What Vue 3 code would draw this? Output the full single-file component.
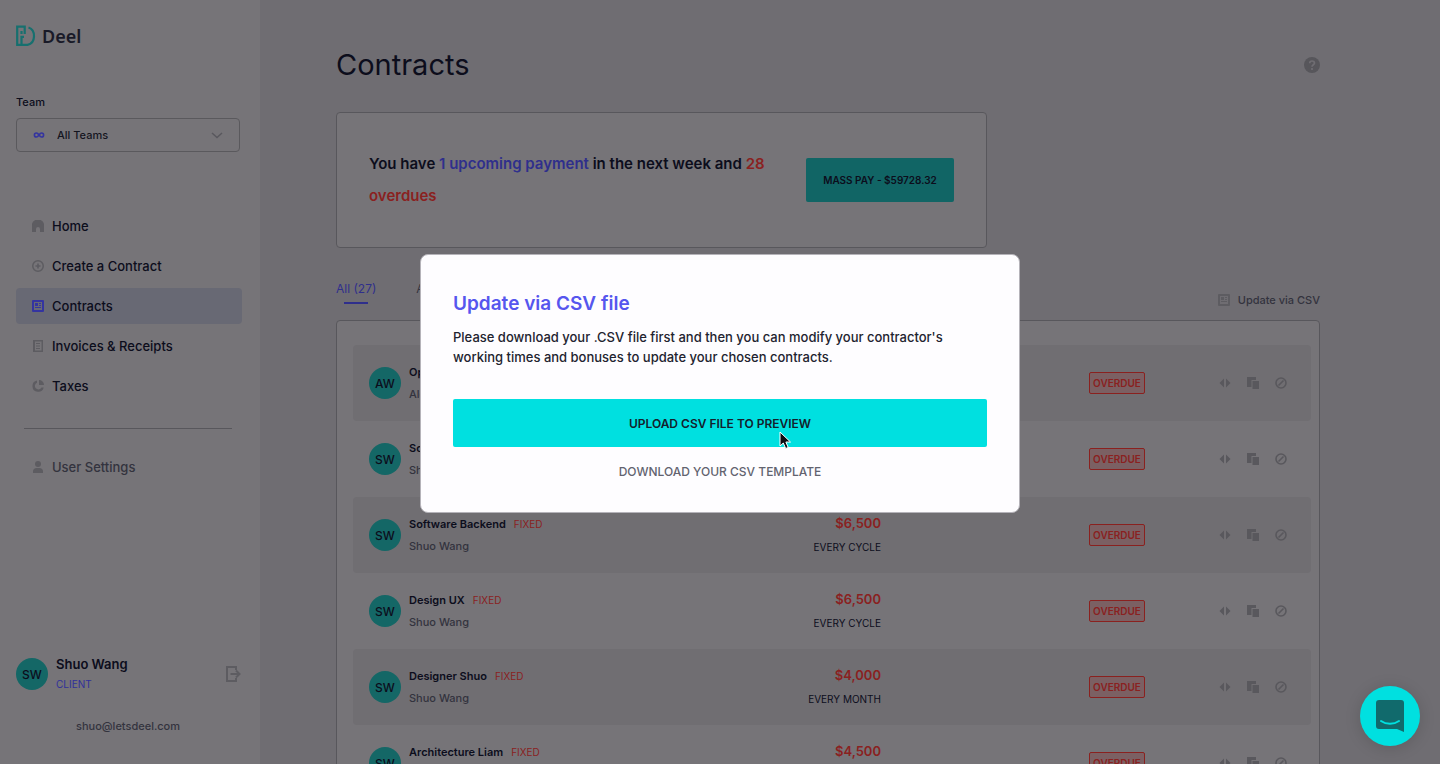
<template>
  <div class="app">
    <aside class="sidebar">
      <a class="logo" href="#">
        <svg width="20" height="22" viewBox="0 0 20 22" fill="none" stroke="#17706f" stroke-width="2.200">
          <path d="M1.200 21V1.600h7.500V9" />
          <path d="M1.200 19.800H5.500v-8H8M5.500 6v3" />
          <path d="M12.500 2.500c7.500 2.500 7.500 15.500-1 17.300H5.500" />
        </svg>
        <span>Deel</span>
      </a>

      <label class="team-label" for="team">Team</label>
      <div class="select">
        <svg width="12" height="6" viewBox="0 0 14 8" fill="none" stroke="#3434a0" stroke-width="2.200">
          <path d="M7 4C5.500 1.800 4.600 1.300 3.600 1.300a2.700 2.700 0 0 0 0 5.400C4.600 6.700 5.500 6.200 7 4s2.400-2.700 3.400-2.700a2.700 2.700 0 0 1 0 5.400C9.400 6.700 8.500 6.200 7 4z" />
        </svg>
        <select id="team" v-model="team">
          <option>All Teams</option>
        </select>
        <svg class="chevron" width="12" height="7" viewBox="0 0 12 7" fill="none" stroke="#59585e" stroke-width="1.500">
          <path d="M1 1l5 4.500L11 1" />
        </svg>
      </div>

      <nav class="nav">
        <a
          v-for="item in menu"
          :key="item.label"
          href="#"
          class="nav-item"
          :class="{ 'nav-item--active': item.label === current }"
          @click.prevent="current = item.label"
        >
          <svg width="12" height="12" viewBox="0 0 12 12"><path :d="item.icon" fill="currentColor" fill-rule="evenodd" /></svg>
          <span>{{ item.label }}</span>
        </a>
      </nav>

      <hr class="divider" />

      <a href="#" class="nav-item nav-item--muted">
        <svg width="12" height="12" viewBox="0 0 12 12" fill="currentColor">
          <circle cx="6" cy="3" r="3" />
          <path d="M1 12V10.500C1 8.300 2.500 7 4.500 7h3C9.500 7 11 8.300 11 10.500V12z" />
        </svg>
        <span>User Settings</span>
      </a>

      <div class="user">
        <span class="avatar">SW</span>
        <div class="user-info">
          <strong>Shuo Wang</strong>
          <span>CLIENT</span>
        </div>
        <button class="icon-btn" aria-label="Log out">
          <svg width="16" height="16" viewBox="0 0 16 16" fill="none" stroke="#5d5c61" stroke-width="2">
            <path d="M10 4V1H1v14h9v-3M4.500 8h9M10 4.500L13.500 8 10 11.500" />
          </svg>
        </button>
      </div>
      <a class="email" href="#">shuo@letsdeel.com</a>
    </aside>

    <main class="main">
      <header class="head">
        <h1>Contracts</h1>
        <button class="icon-btn" aria-label="Help">
          <svg width="16" height="16" viewBox="0 0 16 16" fill="none">
            <circle cx="8" cy="8" r="8" fill="#57565b" />
            <path d="M5.700 6.300c0-3.100 4.800-3 4.800-.2C10.500 7.800 8 7.700 8 9.700M8 11v2" stroke="#6f6d72" stroke-width="1.700" />
          </svg>
        </button>
      </header>

      <section class="banner">
        <p>
          You have <a href="#" class="upcoming">1 upcoming payment</a> in the next week and
          <a href="#" class="overdues">28 overdues</a>
        </p>
        <button class="mass-pay">MASS PAY - $59728.32</button>
      </section>

      <div class="toolbar">
        <div class="tabs">
          <button class="tab tab--active">All (27)</button>
          <button class="tab">Active</button>
        </div>
        <button class="csv-link">
          <svg width="12" height="12" viewBox="0 0 12 12"><path :d="icons.contract" fill="currentColor" fill-rule="evenodd" /></svg>
          Update via CSV
        </button>
      </div>

      <section class="card">
        <table class="contracts">
          <colgroup>
            <col />
            <col class="col-amount" />
            <col class="col-status" />
            <col class="col-actions" />
          </colgroup>
          <tbody>
            <tr v-for="(c, i) in contracts" :key="i">
              <td>
                <div class="contract">
                  <span class="avatar">{{ c.initials }}</span>
                  <div>
                    <div class="name">{{ c.name }}<span class="type">FIXED</span></div>
                    <div class="person">{{ c.person }}</div>
                  </div>
                </div>
              </td>
              <td class="right">
                <div class="amount">{{ c.amount }}</div>
                <div class="period">{{ c.period }}</div>
              </td>
              <td class="right"><span class="badge">OVERDUE</span></td>
              <td class="right">
                <div class="actions">
                  <button aria-label="Expand">
                    <svg width="12" height="12" viewBox="0 0 12 12" fill="currentColor"><path d="M5 1.500v9L.5 6zM7 1.500v9L11.500 6z" /></svg>
                  </button>
                  <button aria-label="Duplicate">
                    <svg width="12" height="12" viewBox="0 0 12 12" fill="currentColor"><path d="M0 0h9v3H4.500v7H0zM5.500 4H12v8H5.500z" /></svg>
                  </button>
                  <button aria-label="Cancel">
                    <svg width="12" height="12" viewBox="0 0 12 12" fill="none" stroke="currentColor" stroke-width="1.600">
                      <circle cx="6" cy="6" r="5" />
                      <path d="M3.500 8.500l5-5" />
                    </svg>
                  </button>
                </div>
              </td>
            </tr>
          </tbody>
        </table>
      </section>
    </main>

    <div class="overlay">
      <div class="modal" role="dialog" aria-modal="true" aria-labelledby="modal-title">
        <h2 id="modal-title">Update via CSV file</h2>
        <p>
          Please download your .CSV file first and then you can modify your contractor's
          working times and bonuses to update your chosen contracts.
        </p>
        <button class="upload">
          UPLOAD CSV FILE TO PREVIEW
          <svg class="cursor" width="13" height="19" viewBox="0 0 13 19">
            <path d="M1 1v14l3.300-3 2.400 5.500 2.500-1.100L6.900 11h4.600z" fill="#0b0b12" stroke="#fff" />
          </svg>
        </button>
        <button class="download">DOWNLOAD YOUR CSV TEMPLATE</button>
      </div>
    </div>

    <button class="chat" aria-label="Open chat">
      <svg width="28" height="32" viewBox="0 0 28 32">
        <path d="M3 0h22a3 3 0 0 1 3 3v29l-7-3H3a3 3 0 0 1-3-3V3a3 3 0 0 1 3-3z" fill="#116a6c" />
        <path d="M5 21c5 3.600 13 3.600 18 0" fill="none" stroke="#00e0e0" stroke-width="2" stroke-linecap="round" />
      </svg>
    </button>
  </div>
</template>

<script setup>
import { ref } from 'vue'

const icons = {
  home: 'M0 4.500C0 2.500 2 0 4 0h4c2 0 4 2.500 4 4.500V12H8V9a2 2 0 0 0-4 0v3H0z',
  create: 'M6 0a6 6 0 1 1 0 12A6 6 0 0 1 6 0zM6 1.500a4.500 4.500 0 1 0 0 9 4.500 4.500 0 0 0 0-9zM5.200 3.500h1.600v1.700h1.700v1.600H6.800v1.700H5.200V6.800H3.500V5.200h1.700z',
  contract: 'M1 0h10a1 1 0 0 1 1 1v10a1 1 0 0 1-1 1H1a1 1 0 0 1-1-1V1a1 1 0 0 1 1-1zM2 2v8h8V2zM3 3h3v3H3zM7 3h2v1H7zM7 5h2v1H7zM3 7h6v1H3z',
  invoice: 'M1 0h10v12H1zM3 1.500v9h6.500v-9zM4 3h4v1H4zM4 5.500h4v1H4zM4 8h4v1H4z',
  tax: 'M5 .500v2.200a3.500 3.500 0 1 0 4.500 4.800h2.200A5.700 5.700 0 1 1 5 .500zM7 0a5 5 0 0 1 5 5H7z',
}

const menu = [
  { label: 'Home', icon: icons.home },
  { label: 'Create a Contract', icon: icons.create },
  { label: 'Contracts', icon: icons.contract },
  { label: 'Invoices & Receipts', icon: icons.invoice },
  { label: 'Taxes', icon: icons.tax },
]

const current = ref('Contracts')
const team = ref('All Teams')

const contracts = [
  { initials: 'AW', name: 'Operations', person: 'Alex Wang', amount: '$5,000', period: 'EVERY MONTH' },
  { initials: 'SW', name: 'Software Frontend', person: 'Shuo Wang', amount: '$6,500', period: 'EVERY CYCLE' },
  { initials: 'SW', name: 'Software Backend', person: 'Shuo Wang', amount: '$6,500', period: 'EVERY CYCLE' },
  { initials: 'SW', name: 'Design UX', person: 'Shuo Wang', amount: '$6,500', period: 'EVERY CYCLE' },
  { initials: 'SW', name: 'Designer Shuo', person: 'Shuo Wang', amount: '$4,000', period: 'EVERY MONTH' },
  { initials: 'SW', name: 'Architecture Liam', person: 'Shuo Wang', amount: '$4,500', period: 'EVERY MONTH' },
]
</script>

<style>
body { margin: 0; background: #6f6d72; }
</style>

<style scoped>
* { box-sizing: border-box; }
.app {
  display: flex; height: 100vh; overflow: hidden;
  font-family: Inter, "Liberation Sans", sans-serif;
  font-size: 12px; color: #0c0d1c; background: #6f6d72;
}
a { color: inherit; text-decoration: none; }
button { font: inherit; color: inherit; border: none; background: none; padding: 0; cursor: pointer; }
svg { flex: none; display: block; }

/* Sidebar */
.sidebar {
  width: 260px; flex: none; display: flex; flex-direction: column;
  padding: 24px 18px 28px 16px; background: #767478;
}
.logo {
  display: flex; align-items: center; gap: 6px; height: 24px;
  font: 600 18px/24px "Noto Sans", sans-serif; color: #191a28;
}
.team-label { margin-top: 44px; font-size: 11px; line-height: 20px; font-weight: 500; }
.select {
  display: flex; align-items: center; width: 224px; height: 34px; margin-top: 6px;
  padding: 0 16px; border: 1px solid #5a595d; border-radius: 4px;
}
.select select {
  flex: 1; appearance: none; border: none; outline: none; background: none;
  padding: 0 0 0 12px; font: inherit; font-size: 11px; font-weight: 500; color: #14151f;
}
.nav { display: flex; flex-direction: column; gap: 4px; margin-top: 56px; }
.nav-item {
  display: flex; align-items: center; gap: 8px; height: 36px; padding-left: 16px;
  border-radius: 4px; font-size: 13px; font-weight: 500;
}
.nav-item svg { color: #5d5c61; }
.nav-item--active { background: #686974; }
.nav-item--active svg { color: #3434a0; }
.nav-item--muted { color: #33333e; }
.divider { width: 208px; margin: 24px 8px 20px; border: none; border-top: 1px solid #58575c; }
.avatar {
  display: flex; align-items: center; justify-content: center; flex: none;
  width: 32px; height: 32px; border-radius: 50%; background: #146766; font-size: 12px; font-weight: 500;
}
.user { display: flex; align-items: center; gap: 8px; margin-top: auto; }
.user-info { flex: 1; display: flex; flex-direction: column; }
.user-info strong { font-size: 13px; line-height: 20px; font-weight: 600; }
.user-info span { font-size: 10px; line-height: 20px; color: #30309a; }
.email { margin-top: 22px; padding-left: 60px; font-size: 11px; line-height: 20px; font-weight: 500; color: #33333e; }

/* Main */
.main { flex: 1; min-width: 0; padding: 42px 120px 0 76px; }
.head { display: flex; align-items: center; justify-content: space-between; height: 46px; }
.head h1 { margin: 0; font-size: 29px; line-height: 46px; font-weight: 400; }
.banner {
  display: flex; align-items: center; gap: 24px; width: 651px; margin-top: 24px;
  padding: 35px 32px; border: 1px solid #58575c; border-radius: 4px; background: #767478;
}
.banner p { flex: 1; margin: 0; font-size: 15px; line-height: 32px; font-weight: 600; }
.upcoming { color: #2f2f8c; }
.overdues { color: #8a211f; }
.mass-pay {
  flex: none; width: 148px; height: 44px; border-radius: 2px; background: #116565;
  font-size: 10px; font-weight: 600;
}
.toolbar { display: flex; justify-content: space-between; height: 72px; padding-top: 28px; }
.tabs { display: flex; gap: 40px; align-items: flex-start; }
.tab {
  display: flex; flex-direction: column; align-items: center;
  font-size: 12px; line-height: 26px; color: #33333e;
}
.tab--active { color: #2f2f8c; }
.tab--active::after { content: ''; width: 24px; height: 2px; background: #2f2f8c; }
.csv-link {
  display: flex; align-items: center; gap: 8px; height: 48px;
  font-size: 11px; font-weight: 500; color: #33333e;
}
.csv-link svg { color: #5d5c61; }

.card {
  padding: 24px 8px 24px 16px; border: 1px solid #58575c; border-radius: 4px; background: #767478;
}
.contracts { width: 100%; table-layout: fixed; border-collapse: separate; border-spacing: 0; }
.col-amount { width: 128px; }
.col-status { width: 264px; }
.col-actions { width: 166px; }
.contracts td { height: 76px; padding: 0; vertical-align: middle; }
.contracts tr:nth-child(odd) td { background: #706e72; }
.contracts td:first-child { padding-left: 16px; border-radius: 4px 0 0 4px; }
.contracts td:last-child { padding-right: 16px; border-radius: 0 4px 4px 0; }
.right { text-align: right; }
.contract { display: flex; align-items: center; gap: 8px; }
.name { font-size: 11px; line-height: 22px; font-weight: 600; }
.type { margin-left: 8px; font-size: 10px; font-weight: 400; color: #8a211f; }
.person { font-size: 11px; line-height: 22px; font-weight: 500; color: #33333e; }
.amount { font-size: 13px; line-height: 24px; font-weight: 600; color: #8a211f; }
.period { font-size: 10px; line-height: 24px; }
.badge {
  display: inline-block; width: 56px; height: 22px; border: 1px solid #8a211f; border-radius: 2px;
  background: #7b6063; color: #8a211f; font-size: 10px; line-height: 20px; font-weight: 600; text-align: center;
}
.actions { display: flex; justify-content: flex-end; }
.actions button { display: flex; justify-content: center; width: 28px; color: #59585d; }

/* Modal */
.overlay {
  position: fixed; inset: 0; display: flex; align-items: center; justify-content: center; padding-top: 3px;
}
.modal {
  display: flex; flex-direction: column; width: 600px; padding: 32px 32px 17px;
  border: 1px solid #b5b3b9; border-radius: 8px; background: #fefdff; color: #22232f;
}
.modal h2 { margin: 0; font-size: 19px; line-height: 34px; font-weight: 600; color: #5656ee; }
.modal p { margin: 6px 0 32px; font-size: 13px; line-height: 20px; font-weight: 500; }
.upload {
  position: relative; height: 48px; border-radius: 2px; background: #00e0e0;
  font-size: 12px; font-weight: 600; color: #14202c;
}
.cursor { position: absolute; left: 326px; top: 32px; }
.download { height: 48px; font-size: 12px; font-weight: 500; color: #62636f; }

.chat {
  position: fixed; right: 20px; bottom: 18px; display: flex; align-items: center; justify-content: center;
  width: 60px; height: 60px; border-radius: 50%; background: #00e0e0;
  box-shadow: 0 2px 16px rgba(0, 0, 0, .15);
}
</style>
